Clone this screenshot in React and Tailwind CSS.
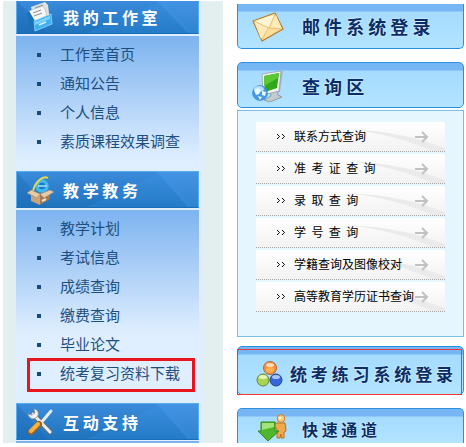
import React from 'react';

const studioLinks = ['工作室首页', '通知公告', '个人信息', '素质课程效果调查'];
const teachingLinks = ['教学计划', '考试信息', '成绩查询', '缴费查询', '毕业论文', '统考复习资料下载'];
const queryLinks = ['联系方式查询', '准  考  证  查  询', '录  取  查  询', '学  号  查  询', '学籍查询及图像校对', '高等教育学历证书查询'];

const FolderIcon = () => (
  <svg viewBox="0 0 28 32" className="h-8 w-7 shrink-0" aria-hidden="true">
    <path d="M4 6 18 1l3 3 2 16-14 6z" fill="#dfe3e2" />
    <path d="m2 10 14-5 2 3 3 12-13 6z" fill="#f8f7f4" stroke="#a9b2b6" strokeWidth=".6" />
    <path d="m8 7 8-3M6 12l8-3M7 15l8-3" stroke="#8f989e" strokeWidth="1.2" />
    <path d="m0 12 2-2 6 10v10L3 25z" fill="#1673b5" />
    <path d="m7 20 17-7 1 10L8 30z" fill="#3fb0ef" stroke="#8edaff" strokeWidth=".8" />
    <path d="m8 21 15-6v3L8 24z" fill="#80d0f8" />
    <path d="m12 24 7-3" stroke="#d4f3ff" strokeWidth="1.6" />
  </svg>
);

const BoxIcon = () => (
  <svg viewBox="0 0 28 32" className="h-8 w-7 shrink-0" aria-hidden="true">
    <circle cx="15" cy="12" r="5" fill="#1a78c8" stroke="#42b8ee" strokeWidth="3.5" />
    <path d="M11 12h9" stroke="#a5e7ff" strokeWidth="1.5" />
    <path d="M6 17C8 8 16 1 21 4" fill="none" stroke="#e8d94b" strokeWidth="2" />
    <path d="m4 16 9 4v11l-9-4z" fill="#cda47a" />
    <path d="m13 20 10-4v9l-10 6z" fill="#a07a58" />
    <path d="m4 16-4 3 10 5 3-4zM23 16l4 2-10 6-4-4z" fill="#e5cba8" stroke="#a77e57" strokeWidth=".5" />
    <path d="m15 27 4-2" stroke="#f5dfbd" strokeWidth="2" />
  </svg>
);

const ToolsIcon = () => (
  <svg viewBox="0 0 28 32" className="h-8 w-7 shrink-0" fill="none" strokeLinecap="round" aria-hidden="true">
    <path d="m6 8 17 18" stroke="#64717a" strokeWidth="5" />
    <path d="m6 8 17 18" stroke="#eceeed" strokeWidth="3" />
    <path d="M1 8c1 5 6 6 9 3 3-4 0-8-3-8l1 4-3 2z" fill="#f2f3f0" stroke="#87939a" strokeWidth=".7" />
    <path d="m24 5-11 13" stroke="#e5ebee" strokeWidth="3" />
    <path d="m12 18-8 8" stroke="#a76013" strokeWidth="6" />
    <path d="m11 18-7 7" stroke="#f7b342" strokeWidth="4" />
  </svg>
);

const MailIcon = () => (
  <svg viewBox="0 0 32 32" className="size-8 shrink-0" aria-hidden="true">
    <path d="M1 11 23 3l8 16-21 12z" fill="#fbdf9d" stroke="#b77a26" strokeWidth="1.2" strokeLinejoin="round" />
    <path d="m2 11 7 18 7-10zM24 5l6 14-11-2z" fill="#fdebb9" />
    <path d="M3 11 23 4l-6 14z" fill="#fff5d5" />
    <path d="m2 11 15 7 6-14M10 30l6-12 14 1" fill="none" stroke="#e2b96f" strokeWidth=".8" />
  </svg>
);

const MonitorIcon = () => (
  <svg viewBox="0 0 32 32" className="size-8 shrink-0" aria-hidden="true">
    <path d="m18 21 7-1 1 5 4 2-12 5-6-2 7-4z" fill="#c4cbd0" stroke="#78858d" strokeWidth=".7" />
    <path d="m28 2 3-1-3 21-3 1z" fill="#aab5ba" />
    <path d="M10 4 29 1l-2 20-16 4z" fill="#f0f3f4" stroke="#8a999f" strokeWidth=".7" />
    <path d="m12 6 15-3-2 15-12 4z" fill="#2fa91a" />
    <path d="m12 6 15-3-1 5-14 8z" fill="#5cc834" />
    <circle cx="8" cy="23" r="7.5" fill="#459ae8" stroke="#2d76bb" strokeWidth=".5" />
    <ellipse cx="7" cy="19" rx="5" ry="3" fill="#b4dfff" />
    <path d="m2 20 4-2 3 2-2 4-3 1zM10 21l4 1-1 4-3-1zM6 26l4 1-2 3z" fill="#ecfaff" />
  </svg>
);

const BallsIcon = () => (
  <svg viewBox="0 0 28 28" className="size-7 shrink-0" aria-hidden="true">
    <circle cx="14" cy="8" r="6.5" fill="#ff8d32" stroke="#a5694c" />
    <circle cx="7" cy="20" r="6" fill="#a9d54e" stroke="#66824d" />
    <circle cx="20" cy="20" r="6" fill="#3566dc" stroke="#2a4682" />
    <ellipse cx="14" cy="10" rx="4" ry="3" fill="#ffb14f" />
    <ellipse cx="14" cy="5" rx="4" ry="2" fill="#ffd9b8" />
    <ellipse cx="7" cy="17" rx="4" ry="2" fill="#e5f4b7" />
    <ellipse cx="20" cy="17" rx="4" ry="2" fill="#a9c3fb" />
  </svg>
);

const DownloadIcon = () => (
  <svg viewBox="0 0 32 30" className="h-8 w-8 shrink-0" aria-hidden="true">
    <path d="M18 9h9l1 8-2 1v6h-3v-4l-1 4h-3v-9l-4-2v-3z" fill="#f5a849" stroke="#b87022" strokeLinejoin="round" />
    <circle cx="23" cy="4.5" r="3.8" fill="#ffc873" stroke="#c98127" />
    <circle cx="22" cy="4" r="1.5" fill="#fff0d0" />
    <path d="M3 8h14v9h4L10 27 0 17h3z" fill="#4fb52b" stroke="#328b20" strokeLinejoin="round" />
    <path d="M4 9h12v4L4 16z" fill="#a2e47a" />
  </svg>
);

const MenuHeader = ({ icon, title, height = 'h-[37px]' }) => (
  <h2 className={`relative flex items-center gap-2 border border-[#56adf2] border-b-[#176fb8] bg-linear-to-b from-[#3a8bdb] to-[#1f74bd] pl-2.5 text-base font-bold text-white ${height}`}>
    <svg viewBox="0 0 181 35" preserveAspectRatio="none" className="absolute inset-0 size-full" aria-hidden="true">
      <path d="M0 0 30 35H0z" fill="#1a68b4" opacity=".35" />
      <path d="M140 0h41v35h-10z" fill="#5fb0ff" opacity=".25" />
      <path d="M70 35 145 0l30 35z" fill="#3c9cf0" opacity=".2" />
    </svg>
    <span className="relative">{icon}</span>
    <span className="relative">{title}</span>
  </h2>
);

const MenuList = ({ links, highlight }) => (
  <ul className="mt-0.5 bg-linear-to-b from-[#7db3ef] to-[#e0efff] to-[125px] pt-1 pb-[15px] text-[15px] text-[#1d4f80]">
    {links.map((link) => (
      <li key={link} className={link === highlight ? 'relative' : ''}>
        <a href="#" className="flex h-[29px] items-center gap-[19px] pl-[21px]">
          <span className="size-1 bg-[#154a7b]" />
          {link}
        </a>
        {link === highlight && <span className="pointer-events-none absolute -top-px right-1 -bottom-1 left-[11px] border-3 border-[#e8141e]" />}
      </li>
    ))}
  </ul>
);

const Banner = ({ icon, children, className }) => (
  <button type="button" className={`relative flex w-full items-center rounded-[5px] border border-[#2b8fdd] bg-linear-to-b from-[#76b6f4] from-[7px] via-[#a5dbff] via-[8px] to-[#b3e4ff] text-left font-bold whitespace-nowrap text-[#092d66] text-shadow-[0_0_2px_white] ${className}`}>
    {icon}
    {children}
  </button>
);

const QueryRow = ({ label }) => (
  <li className="border-b border-dotted border-[#aaa3a8]">
    <a href="#" className="relative flex h-[29px] items-center bg-linear-to-b from-white to-[#f2f2f2] pl-5 text-xs text-black">
      <svg viewBox="0 0 100 28" preserveAspectRatio="none" className="absolute right-0 h-full w-1/2" aria-hidden="true">
        <path d="M0 7Q60 10 100 26v2H86Q50 13 0 7" fill="#eaeaea" />
      </svg>
      <svg viewBox="0 0 9 7" className="mr-[9px] h-[7px] w-[9px]" fill="none" stroke="currentColor" aria-hidden="true">
        <path d="m1 1 2.5 2.5L1 6M6 1l2.5 2.5L6 6" />
      </svg>
      <span className="relative pb-0.5 whitespace-pre">{label}</span>
      <svg viewBox="0 0 14 12" className="absolute right-4 h-3 w-3.5" fill="none" stroke="#c2c2c2" strokeWidth="2" aria-hidden="true">
        <path d="M0 6h12M7 1l5 5-5 5" />
      </svg>
    </a>
  </li>
);

export default function App() {
  return (
    <main className="grid grid-cols-[220fr_227fr] gap-3.5 bg-white pr-0.5 pl-[3px] font-['Noto_Sans_CJK_SC',sans-serif]">
      <nav className="mt-px min-w-0 self-start bg-[#e3efee] pr-[19px] pl-[13px]">
        <div className="border-r-5 border-[#dfeeff] bg-[#dfeeff]">
          <MenuHeader icon={<FolderIcon />} title="我 的 工 作 室" height="h-[33px] border-t-0" />
          <MenuList links={studioLinks} />
          <MenuHeader icon={<BoxIcon />} title="教 学 教 务" />
          <MenuList links={teachingLinks} highlight="统考复习资料下载" />
          <MenuHeader icon={<ToolsIcon />} title="互 动 支 持" />
          <div className="mt-px h-0.5 bg-[#7db3ef]" />
        </div>
      </nav>
      <section className="min-w-0 pt-1">
        <Banner icon={<MailIcon />} className="h-[45px] gap-[18px] rounded-t-none border-t-0 pl-3.5 text-lg">邮 件 系 统 登 录</Banner>
        <Banner icon={<MonitorIcon />} className="mt-[13px] h-[46px] gap-[18px] pt-0.5 pl-3.5 text-lg">查 询 区</Banner>
        <ul className="mt-0.5 flex flex-col gap-0.5 border border-[#7dbee5] bg-[#e6f6ff] px-[18px] pt-[11px] pb-6">
          {queryLinks.map((label) => <QueryRow key={label} label={label} />)}
        </ul>
        <Banner icon={<BallsIcon />} className="mt-[9px] h-[49px] gap-1.5 pt-1.5 pl-[18px] text-[17px]">
          统 考 练 习 系 统 登 录
          <span className="pointer-events-none absolute top-0.5 right-px -bottom-px -left-px border border-[#f0353c]" />
        </Banner>
        <Banner icon={<DownloadIcon />} className="mt-[13px] h-[35px] gap-3 rounded-b-none border-b-0 pt-1.5 pl-5 text-base">快 速 通 道</Banner>
      </section>
    </main>
  );
}
